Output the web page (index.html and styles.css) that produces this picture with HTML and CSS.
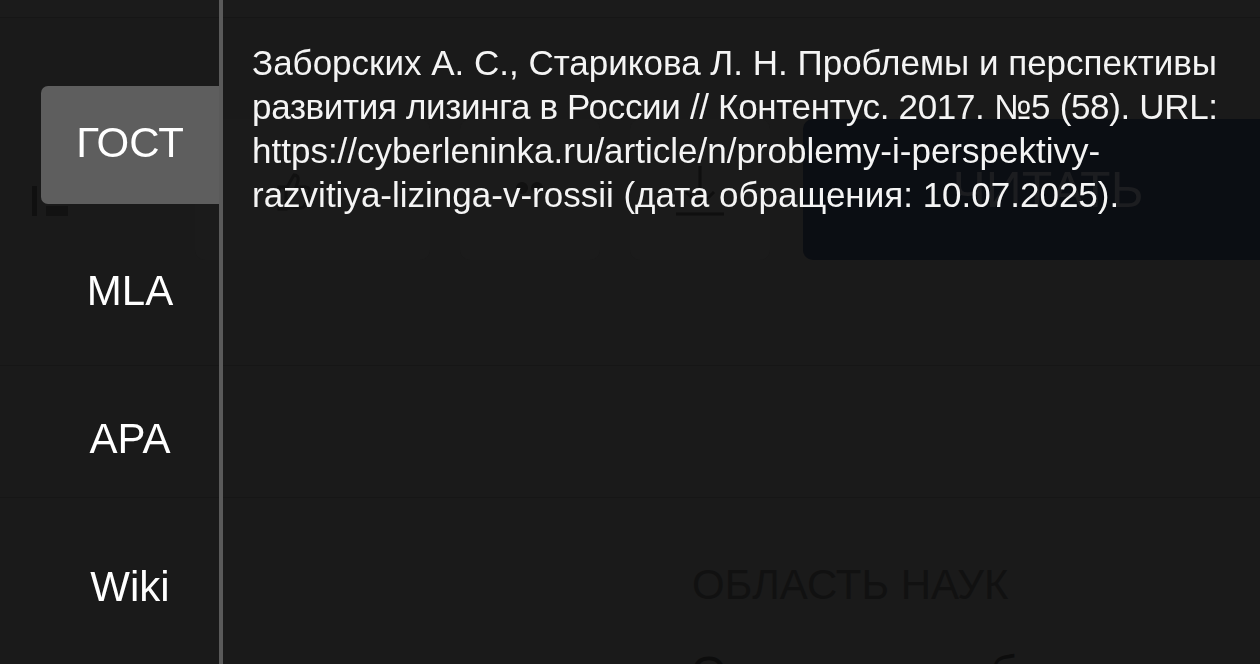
FILE: index.html
```html
<!DOCTYPE html>
<html lang="ru">
<head>
<meta charset="utf-8">
<title>Цитировать</title>
<link rel="stylesheet" href="styles.css">
</head>
<body>
<div class="page">
  <div class="topbar"></div>
  <div class="actions">
    <div class="act-icon">
      <svg width="40" height="36" viewBox="0 0 40 36"><rect x="2" y="4" width="5" height="30" fill="#101010"/><rect x="16" y="24" width="22" height="10" fill="#121212"/></svg>
    </div>
    <div class="act-box wide">
      <svg width="40" height="50" viewBox="0 0 40 50" fill="none" stroke="#111" stroke-width="3"><path d="M6 22h7v22H6zM13 24l8-14c3 0 5 2 4 6l-2 6h10c3 0 4 3 3 5l-4 13c-1 2-2 3-4 3H13"/></svg>
    </div>
    <div class="act-box">
      <svg width="30" height="20" viewBox="0 0 30 20" fill="#111"><circle cx="7" cy="8" r="6"/><circle cx="22" cy="8" r="6"/></svg>
    </div>
    <div class="act-box">
      <svg width="52" height="56" viewBox="0 0 52 56" fill="none" stroke="#0f0f0f" stroke-width="3"><path d="M26 4v40M12 30l14 14 14-14M2 52h48"/></svg>
    </div>
    <div class="read-btn">ЧИТАТЬ</div>
  </div>
  <div class="band"></div>
  <div class="field">
    <div class="field-title">ОБЛАСТЬ НАУК</div>
    <div class="field-name">Экономика и бизнес</div>
  </div>
</div>

<div class="modal">
  <nav class="tabs">
    <div class="tab active">ГОСТ</div>
    <div class="tab">MLA</div>
    <div class="tab">APA</div>
    <div class="tab">Wiki</div>
  </nav>
  <div class="cite">
    <p>Заборских А. С., Старикова Л. Н. Проблемы и перспективы<br><span class="tight">развития лизинга в России // Контентус. 2017. №5 (58). URL:</span><br>https://cyberleninka.ru/article/n/problemy-i-perspektivy-<br>razvitiya-lizinga-v-rossii (дата обращения: 10.07.2025).</p>
  </div>
</div>
</body>
</html>
```

FILE: styles.css
```css
html, body {
  margin: 0;
  padding: 0;
}
body {
  width: 1260px;
  height: 664px;
  overflow: hidden;
  background: #1a1a1a;
  font-family: "Liberation Sans", Arial, sans-serif;
}

/* faint page behind the dialog */
.page {
  height: 664px;
  overflow: hidden;
}
.topbar {
  height: 17px;
  background: #1b1b1b;
  border-bottom: 1px solid #161616;
}
.actions {
  display: flex;
  height: 141px;
  margin-top: 101px;
  padding-left: 30px;
}
.act-icon {
  width: 40px;
  display: flex;
  align-items: center;
  padding-top: 20px;
}
.act-box {
  width: 140px;
  margin-left: 30px;
  background: #1b1b1b;
  border-radius: 10px;
  display: flex;
  align-items: center;
  justify-content: center;
  flex-shrink: 0;
}
.act-box.wide {
  width: 235px;
  margin-left: 125px;
  justify-content: flex-start;
  padding-left: 78px;
  box-sizing: border-box;
}
.read-btn {
  flex-shrink: 0;
  width: 490px;
  margin-left: 33px;
  background: #0b0e13;
  border-radius: 10px;
  color: #1c1d20;
  font-size: 50px;
  display: flex;
  align-items: center;
  justify-content: center;
}
.band {
  margin-top: 105px;
  height: 131px;
  border-top: 1px solid #161616;
  border-bottom: 1px solid #161616;
}
.field {
  padding-left: 692px;
  padding-top: 66px;
}
.field-title {
  font-size: 42px;
  line-height: 1;
  color: #111111;
}
.field-name {
  margin-top: 44px;
  font-size: 48px;
  line-height: 1;
  color: #0d0d0d;
}

/* dialog */
.modal {
  position: fixed;
  inset: 0;
  display: flex;
}
.tabs {
  width: 219px;
  flex-shrink: 0;
  padding-top: 86px;
  display: flex;
  flex-direction: column;
  gap: 30px;
}
.tab {
  margin-left: 41px;
  height: 118px;
  box-sizing: border-box;
  padding-bottom: 4px;
  display: flex;
  align-items: center;
  justify-content: center;
  font-size: 42px;
  color: #ffffff;
}
.tab.active {
  background: #5e5e5e;
  border-radius: 7px 0 0 7px;
}
.cite {
  flex: 1;
  border-left: 4px solid #5a5a5a;
  padding-left: 29px;
  padding-top: 41px;
}
.cite p {
  margin: 0;
  font-size: 35px;
  line-height: 44px;
  color: #f4f4f4;
  white-space: nowrap;
}
.cite .tight {
  letter-spacing: -0.33px;
}
```
